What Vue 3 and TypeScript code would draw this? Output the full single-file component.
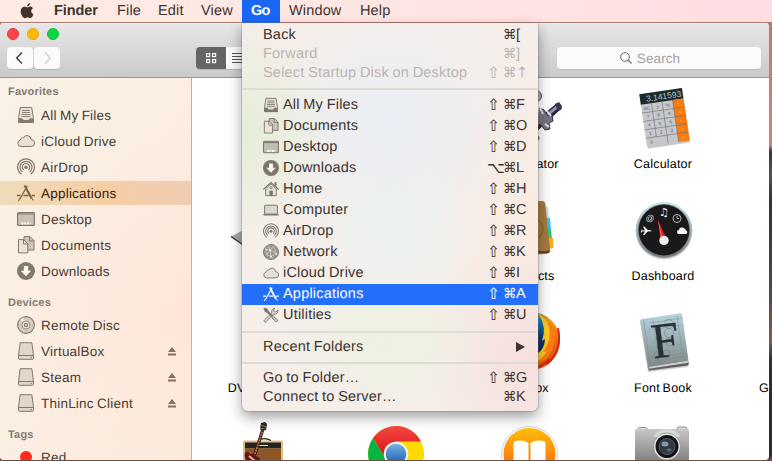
<script setup lang="ts">
interface SideRow { icon: string; label: string; active?: boolean; eject?: boolean }
interface SideGroup { title: string; rows: SideRow[] }
interface MenuRow { label: string; icon?: string; mod?: string; key?: string; disabled?: boolean; active?: boolean; submenu?: boolean }

const menus: { label: string; cls: string }[] = [
  { label: 'Finder', cls: 'finder' },
  { label: 'File', cls: 'file' },
  { label: 'Edit', cls: 'edit' },
  { label: 'View', cls: 'view' },
  { label: 'Go', cls: 'go' },
  { label: 'Window', cls: 'window-item' },
  { label: 'Help', cls: 'help' },
]

const groups: SideGroup[] = [
  {
    title: 'Favorites',
    rows: [
      { icon: 'files', label: 'All My Files' },
      { icon: 'cloud', label: 'iCloud Drive' },
      { icon: 'airdrop', label: 'AirDrop' },
      { icon: 'apps', label: 'Applications', active: true },
      { icon: 'desktop', label: 'Desktop' },
      { icon: 'docs', label: 'Documents' },
      { icon: 'down', label: 'Downloads' },
    ],
  },
  {
    title: 'Devices',
    rows: [
      { icon: 'disc', label: 'Remote Disc' },
      { icon: 'drive', label: 'VirtualBox', eject: true },
      { icon: 'drive', label: 'Steam', eject: true },
      { icon: 'drive', label: 'ThinLinc Client', eject: true },
    ],
  },
  { title: 'Tags', rows: [{ icon: 'red', label: 'Red' }] },
]

const sections: MenuRow[][] = [
  [
    { label: 'Back', key: '[' },
    { label: 'Forward', key: ']', disabled: true },
    { label: 'Select Startup Disk on Desktop', mod: '⇧', key: '↑', disabled: true },
  ],
  [
    { icon: 'files', label: 'All My Files', mod: '⇧', key: 'F' },
    { icon: 'docs', label: 'Documents', mod: '⇧', key: 'O' },
    { icon: 'desktop', label: 'Desktop', mod: '⇧', key: 'D' },
    { icon: 'down', label: 'Downloads', mod: '⌥', key: 'L' },
    { icon: 'home', label: 'Home', mod: '⇧', key: 'H' },
    { icon: 'computer', label: 'Computer', mod: '⇧', key: 'C' },
    { icon: 'airdrop', label: 'AirDrop', mod: '⇧', key: 'R' },
    { icon: 'network', label: 'Network', mod: '⇧', key: 'K' },
    { icon: 'cloud', label: 'iCloud Drive', mod: '⇧', key: 'I' },
    { icon: 'apps', label: 'Applications', mod: '⇧', key: 'A', active: true },
    { icon: 'tools', label: 'Utilities', mod: '⇧', key: 'U' },
  ],
  [{ label: 'Recent Folders', submenu: true }],
  [
    { label: 'Go to Folder…', mod: '⇧', key: 'G' },
    { label: 'Connect to Server…', key: 'K' },
  ],
]

const apps: { id: string; label: string }[] = [
  { id: '', label: '' },
  { id: '', label: '' },
  { id: 'automator', label: 'Automator' },
  { id: 'calculator', label: 'Calculator' },
  { id: '', label: '' },
  { id: 'chess', label: '' },
  { id: '', label: '' },
  { id: 'contacts', label: 'Contacts' },
  { id: 'dashboard', label: 'Dashboard' },
  { id: '', label: '' },
  { id: '', label: 'DVD Player' },
  { id: '', label: '' },
  { id: 'firefox', label: 'Firefox' },
  { id: 'fontbook', label: 'Font Book' },
  { id: '', label: 'Game Center' },
  { id: 'garage', label: '' },
  { id: 'chrome', label: '' },
  { id: 'ibooks', label: '' },
  { id: 'capture', label: '' },
  { id: '', label: '' },
]

const keypad: string[][] = [
  ['AC', '±', '%', '÷'],
  ['7', '8', '9', '×'],
  ['4', '5', '6', '−'],
  ['1', '2', '3', '+'],
  ['0', '', '.', '='],
]
</script>

<template>
  <div class="screen">
    <svg class="defs" width="0" height="0">
      <symbol id="i-files" viewBox="0 0 18 18">
        <path d="M3.300 1.500h11.400l1.600 10v5H1.700v-5z" fill="currentColor" fill-opacity=".12" stroke="currentColor" />
        <path d="M5 4.500h8M5 6.500h8M4.500 8.500h9M4.500 10.500h9" stroke="currentColor" fill="none" stroke-width=".9" />
        <path d="M1.500 12.200h3.500l1.500 1.800h5l1.500-1.800h3.500v4.800h-15z" fill="currentColor" />
      </symbol>
      <symbol id="i-cloud" viewBox="0 0 18 18">
        <path d="M4 14.500a3.300 3.300 0 0 1-.6-6.500 2.300 2.300 0 0 1 3-2.200A4 4 0 0 1 14 7.500a3.500 3.500 0 0 1 .2 7z" fill="currentColor" fill-opacity=".12" stroke="currentColor" />
      </symbol>
      <symbol id="i-airdrop" viewBox="0 0 18 18">
        <g fill="none" stroke="currentColor" stroke-width="1.200">
          <path d="M4.300 16.200a8.400 8.400 0 1 1 9.400 0" />
          <path d="M5.300 14a6 6 0 1 1 7.400 0" />
          <path d="M6.600 12a3.700 3.700 0 1 1 4.800 0" />
        </g>
        <circle cx="9" cy="9.300" r="1.700" fill="currentColor" />
      </symbol>
      <symbol id="i-apps" viewBox="0 0 18 18">
        <g fill="none" stroke="currentColor">
          <path d="M10.300 1.800L3 15" stroke-width="1.300" />
          <path d="M7.600 1.500L14.600 14.500" stroke-width="2.100" />
          <path d="M0 11.500h3.500M6.500 11.500h5M14.800 11.500H18" stroke-width="1.400" />
          <path d="M14.500 14l2 2.500M2.600 14.500L1.500 17" stroke-width="1.100" />
        </g>
      </symbol>
      <symbol id="i-desktop" viewBox="0 0 18 18">
        <rect x=".6" y="2.600" width="16.800" height="12.800" rx="1" fill="currentColor" fill-opacity=".38" stroke="currentColor" stroke-width="1.200" />
        <path d="M1 4h16" stroke="currentColor" stroke-width="1.200" />
        <path d="M4.500 13.500h9" stroke="#fffaf0" stroke-width="2" stroke-dasharray="2 .8" />
      </symbol>
      <symbol id="i-docs" viewBox="0 0 18 18">
        <path d="M7 .600h6l4 4V14H7z" fill="currentColor" fill-opacity=".35" stroke="currentColor" />
        <path d="M12.500 1v4H17" fill="none" stroke="currentColor" />
        <path d="M1.500 3.600h5.300l4 4.200v9.100H1.500z" fill="#ece4d9" stroke="currentColor" />
        <path d="M6.500 4v4h4.300" fill="none" stroke="currentColor" />
      </symbol>
      <symbol id="i-down" viewBox="0 0 18 18">
        <circle cx="9" cy="9" r="9" fill="currentColor" />
        <path d="M6.800 4h4.400v4.700h3L9 14.300 3.800 8.700h3z" fill="#fff8ef" />
      </symbol>
      <symbol id="i-home" viewBox="0 0 18 18">
        <path d="M3 9L9 3.200 15 9v7.500H3z" fill="currentColor" fill-opacity=".12" stroke="currentColor" />
        <path d="M.3 9.700L9 1.800l8.700 7.900" fill="none" stroke="currentColor" stroke-width="1.400" />
        <path d="M13 1.500h2.200v5L13 4.700zM7.200 11h3.800v6H7.200z" fill="currentColor" />
        <circle cx="9" cy="7.500" r="1.200" fill="none" stroke="currentColor" stroke-width=".8" />
      </symbol>
      <symbol id="i-computer" viewBox="0 0 18 18">
        <rect x="1.800" y="3.600" width="14.400" height="10" rx=".8" fill="currentColor" fill-opacity=".2" stroke="currentColor" stroke-width="1.100" />
        <path d="M0 13.600h18l-1 1.700H1z" fill="currentColor" />
      </symbol>
      <symbol id="i-network" viewBox="0 0 18 18">
        <circle cx="9" cy="9" r="8.500" fill="currentColor" fill-opacity=".75" stroke="currentColor" />
        <path d="M3 6l5 1 5-5M8 7l1 7 6-3M3 6l1 6 5 2M8 7l7 4M4 12l4-5M9 14l2 3M8 7L6 2M13 5l2 6" stroke="#f2ece5" stroke-width=".6" fill="none" />
        <g fill="#f2ece5"><circle cx="8" cy="7" r="1.200" /><circle cx="9" cy="14" r="1.200" /><circle cx="15" cy="11" r="1" /><circle cx="3.500" cy="6" r=".9" /></g>
      </symbol>
      <symbol id="i-tools" viewBox="0 0 18 18">
        <path d="M13 1.200a4 4 0 0 0-3 5.300L1.500 14.600a1.300 1.300 0 0 0 1.900 1.900L11.700 8a4 4 0 0 0 5.200-4.400l-2.600 2-2-.5-.2-1.700z" fill="currentColor" fill-opacity=".15" stroke="currentColor" />
        <path d="M1 2l1-1 3 1.200 1 2.300 5.300 5.400-1.400 1.400-5.600-5.200L2.200 5z" fill="currentColor" stroke="currentColor" stroke-width=".6" />
        <path d="M11.800 10.500l5 4.500-1.800 2-5-5z" fill="currentColor" fill-opacity=".35" stroke="currentColor" />
      </symbol>
      <symbol id="i-disc" viewBox="0 0 18 18">
        <circle cx="9" cy="9" r="8.300" fill="currentColor" fill-opacity=".28" stroke="currentColor" stroke-width="1.200" />
        <path d="M9 9L3 3.500A8 8 0 0 1 6.500 1.300z" fill="#fff" opacity=".5" />
        <circle cx="9" cy="9" r="4" fill="#f4eade" stroke="currentColor" stroke-width=".8" />
        <circle cx="9" cy="9" r="1.600" fill="none" stroke="currentColor" stroke-width="1.200" />
      </symbol>
      <symbol id="i-drive" viewBox="0 0 18 18">
        <path d="M3.200.700h11.600l1.700 12.600v3.100q0 .9-.9.900H2.400q-.9 0-.9-.9v-3.100z" fill="currentColor" fill-opacity=".2" stroke="currentColor" />
        <path d="M1.500 13.500h15" stroke="currentColor" />
        <circle cx="14.200" cy="15.500" r=".7" fill="currentColor" />
      </symbol>
      <symbol id="i-red" viewBox="0 0 18 18"><circle cx="9" cy="9" r="6" fill="#fb2b20" /></symbol>
    </svg>

    <header class="menubar">
      <svg class="apple" viewBox="0 0 14 16">
        <path d="M10.300 0c.1 1.700-1.400 3.400-3.200 3.400C6.900 1.800 8.500.2 10.300 0zM7.200 4.400c.7 0 1.600-.8 2.900-.8 1.200 0 2.300.6 2.900 1.600-2.600 1.500-2.200 5 .5 6-.5 1.400-1.800 4-3.400 4-1 0-1.400-.6-2.600-.6s-1.700.6-2.600.6C3 15.200.700 11.500.700 8.200c0-3 1.900-4.500 3.700-4.500 1.200 0 2.100.7 2.800.7z" fill="currentColor" />
      </svg>
      <span v-for="m in menus" :key="m.label" class="mb-item" :class="m.cls">{{ m.label }}</span>
    </header>

    <main class="finder-window">
      <div class="toolbar">
        <div class="lights"><i class="l-red" /><i class="l-yellow" /><i class="l-green" /></div>
        <div class="tools">
          <button class="nav"><svg viewBox="0 0 26 22"><path d="M15 5.500L9.700 11l5.300 5.500" fill="none" stroke="#4a4a4a" stroke-width="1.600" /></svg></button>
          <button class="nav"><svg viewBox="0 0 26 22"><path d="M11 5.500l5.300 5.500-5.300 5.500" fill="none" stroke="#cfcfcf" stroke-width="1.300" /></svg></button>
          <div class="segments">
            <div class="seg dark"><svg viewBox="0 0 30 22"><g fill="none" stroke="#fff" stroke-width="1.200"><rect x="10.600" y="6.600" width="3" height="3" /><rect x="16.600" y="6.600" width="3" height="3" /><rect x="10.600" y="12.600" width="3" height="3" /><rect x="16.600" y="12.600" width="3" height="3" /></g></svg></div>
            <div class="seg"><svg viewBox="0 0 30 22"><path d="M6 6.500h12M6 9.500h12M6 12.500h12M6 15.500h12" stroke="#555" /></svg></div>
          </div>
          <div class="search">
            <svg viewBox="0 0 12 12"><circle cx="5" cy="5" r="4.300" fill="none" stroke="#666" /><path d="M8.200 8.200l3.300 3.300" stroke="#666" stroke-width="1.200" /></svg>
            <span>Search</span>
          </div>
        </div>
      </div>

      <div class="body">
        <aside class="sidebar">
          <section v-for="g in groups" :key="g.title">
            <h2>{{ g.title }}</h2>
            <div v-for="r in g.rows" :key="r.label" class="side-row" :class="{ active: r.active }">
              <svg class="side-icon"><use :href="'#i-' + r.icon" /></svg>
              <span class="side-label">{{ r.label }}</span>
              <svg v-if="r.eject" class="eject" viewBox="0 0 8 9"><path d="M4 0l4 5H0zM0 6.500h8v2H0z" fill="currentColor" /></svg>
            </div>
          </section>
        </aside>

        <div class="grid">
          <div v-for="(a, i) in apps" :key="i" class="app">
            <svg class="app-icon" viewBox="0 0 64 64">
              <template v-if="a.id === 'automator'">
                <circle cx="39" cy="10" r="5.500" fill="#a9a9b0" stroke="#55555c" />
                <path d="M30 42L60 17l5 5-30 28z" fill="#28263a" />
                <path d="M38 37l22-18 2 2-22 19z" fill="#9993b7" />
                <path d="M58 18l4-2 3 4-1 4-3 1z" fill="#3b374f" />
                <path d="M42 22l5 2 4 6 4-1 1 6-4 2 1 6-5 1-5-6-4 3" fill="#77737f" stroke="#34313d" />
                <path d="M43 22l3 6M48 38l4 3M50 25l4 5" stroke="#dedee4" stroke-width="2" />
                <circle cx="40" cy="52" r="2.500" fill="#666" />
              </template>
              <template v-else-if="a.id === 'calculator'">
                <g transform="translate(8.300 8.300) rotate(-8.400)">
                  <rect x=".5" y="1" width="43" height="54" rx="1" fill="#000" opacity=".22" />
                  <rect width="43" height="53" rx=".8" fill="#c5c7ca" />
                  <rect width="43" height="10.500" fill="#1d2b2b" />
                  <rect x="32" y="10.500" width="11" height="42.500" fill="#fb7a0c" />
                  <path d="M0 19h43M0 27.500h43M0 36h43M0 44.500h43M10.700 10.500v34M21.400 10.500V53M32 10.500V53" stroke="#6f7378" stroke-width=".6" />
                  <text x="41.500" y="8.400" text-anchor="end" class="calc-display">3.141593</text>
                  <template v-for="(line, y) in keypad" :key="y">
                    <text v-for="(k, x) in line" :key="x" :x="5.400 + x * 10.700" :y="16.500 + y * 8.500" class="calc-key" :class="{ op: x === 3 }">{{ k }}</text>
                  </template>
                </g>
              </template>
              <template v-else-if="a.id === 'chess'">
                <path d="M2 38.500L30 24v32z" fill="#a9a9a9" /><path d="M2 38.500L30 58" stroke="#333" stroke-width="1.500" />
              </template>
              <template v-else-if="a.id === 'contacts'">
                <path d="M47 8l4 1 1 13-4 1z" fill="#d5d5d5" /><path d="M48 20l5 0 1 11-5 1z" fill="#39bff0" />
                <path d="M49 31l5 0 1 10-5 1z" fill="#22d175" /><path d="M50 40h6l.5 10-6 1z" fill="#f7ae1b" />
                <path d="M8 3h37q3 0 3.300 3L53 51q0 5-5 5l-32 2z" fill="#a67a3f" />
                <path d="M16 56l36-1q1-1 1-3l-4 1H16z" fill="#68441d" />
                <circle cx="35" cy="31" r="11" fill="none" stroke="#7b5729" stroke-width=".8" />
              </template>
              <template v-else-if="a.id === 'dashboard'">
                <circle cx="33" cy="33" r="28.500" fill="#000" opacity=".18" />
                <circle cx="33" cy="32" r="28" fill="url(#dashRim)" />
                <circle cx="33" cy="32" r="25.500" fill="#191919" stroke="#4a5054" stroke-width=".5" />
                <text x="19" y="23" class="at">@</text>
                <text x="33" y="17.500" class="note">♫</text>
                <circle cx="46" cy="20.500" r="4" fill="none" stroke="#ddd" stroke-width=".8" /><path d="M46 18v2.500h2" fill="none" stroke="#ddd" stroke-width=".8" />
                <path d="M10 32.500l4-.3-2-3.700h1.300l3.400 3.600 3.300.2q1 .4 0 .9l-3.300.2-3.400 3.600H12l2-3.600-2.500-.1-1 1.200h-.8l.5-1.900-.5-1.900h.8z" fill="#fff" />
                <path d="M48 36a2 2 0 0 1 0-4 3 3 0 0 1 5.200-1.500 2.300 2.300 0 0 1 1.800 2 1.800 1.800 0 0 1-.2 3.500z" fill="#fff" />
                <path d="M27 21.500l2.800 20.500 5.500-1.500z" fill="#e5131d" /><path d="M27 21.500l3 20 2-.6z" fill="#ff6060" />
                <circle cx="33" cy="42.500" r="4.700" fill="#eee" />
              </template>
              <template v-else-if="a.id === 'firefox'">
                <circle cx="34" cy="31" r="29" fill="url(#fox)" />
                <circle cx="31" cy="26" r="22" fill="url(#globe)" />
                <path d="M42 4q8 5 9 12l3-3q5 12-1 23l2 0q-5 15-19 17l-5-7q16-1 17-17l-3 2q5-13-3-27z" fill="#ffcb1f" />
                <path d="M51 13q5 16-5 29l4-1q-5 9-14 12 14 0 19-13 6-13-1-28z" fill="#ff7b10" />
                <path d="M61 18q5 22-11 36l2-5q-7 8-16 10" fill="none" stroke="#cf2512" stroke-width="1.800" />
              </template>
              <template v-else-if="a.id === 'fontbook'">
                <path d="M9 11L51 5l7 49-1 3-40 5z" fill="#000" opacity=".2" />
                <path d="M16.500 56L56 49.500l2 4-1.500 2L18 60.500z" fill="#625e5b" />
                <path d="M17 56.500l40-6 .5 2.300-39.300 6z" fill="#c9cccd" />
                <path d="M9 11q-.2-1.500 1.300-1.800L49 3.300q1.700-.2 2 1.300l6.300 46L17 57z" fill="url(#book)" />
                <path d="M12.500 9.500l7 47" stroke="#7b8f98" stroke-width=".6" />
                <path d="M18 13l34-5M22 52l32-6M22 9l6 45M46 6l6 42M20 48l34-5M17 20l35-5" stroke="#70868c" stroke-width=".4" />
                <g fill="none" stroke="#667c82" stroke-width=".5"><circle cx="38" cy="14" r="4.500" /><circle cx="38" cy="23" r="4.500" /><circle cx="39" cy="32" r="4" /><circle cx="27" cy="45" r="4" /><circle cx="35" cy="44" r="4" /></g>
                <text x="22.500" y="48.500" transform="rotate(-7 22 48)" class="big-f">F</text>
              </template>
              <template v-else-if="a.id === 'garage'">
                <rect x="14" y="18.500" width="40" height="46" rx="1.500" fill="#dfbd7c" />
                <rect x="16" y="20.500" width="36" height="6" fill="#252422" />
                <rect x="16" y="26.500" width="36" height="38" fill="#8f5728" />
                <path d="M30 18q6-3 12 .5" fill="none" stroke="#222" stroke-width="1.200" />
                <path d="M29 23.500h10" stroke="#ddd" stroke-width="1" />
                <path d="M34 7L25 35" stroke="#33160d" stroke-width="3.200" /><path d="M34 7L25 35" stroke="#b28360" stroke-width="1.600" stroke-dasharray="2 .7" />
                <path d="M32 1l4-1 2 2-1 6-4 1-2-2z" fill="#29271c" /><path d="M32 3l5 2M31 6l5 1" stroke="#ada678" stroke-width=".7" />
                <path d="M17 38q-3-6 0-8 2-1 4 2 3-1 4 1l6 3v5z" fill="#63131a" /><path d="M20 34l6 5" stroke="#e6b7a0" stroke-width="2" />
              </template>
              <template v-else-if="a.id === 'chrome'">
                <circle cx="33" cy="32" r="28" fill="#ffd900" />
                <path d="M33 19.500h25A28 28 0 0 0 10 16l12 20z" fill="url(#chrRed)" />
                <path d="M10 16a28 28 0 0 0 9 40l13-14-10-6z" fill="#04b63f" />
                <circle cx="33" cy="32" r="12.300" fill="#f3f4ee" />
                <circle cx="33" cy="32" r="10.300" fill="url(#chrBlue)" />
              </template>
              <template v-else-if="a.id === 'ibooks'">
                <circle cx="32.500" cy="32.500" r="28" fill="#fff" stroke="#d4d4d4" />
                <circle cx="32.500" cy="32" r="26" fill="url(#books)" />
                <path d="M31.500 21q-6-4-14-1.500-1 .5-1 2V42h15zM33.500 21q6-4 14-1.500 1 .5 1 2V42h-15z" fill="#fff" />
              </template>
              <template v-else-if="a.id === 'capture'">
                <path d="M7 7q0-1.500 1.500-1.500h6Q16 5.500 16 7M46 7q0-2 2-2h6q2 0 2 2" fill="#ddd" stroke="#777" stroke-width=".8" />
                <rect x="4" y="7" width="54" height="52" rx="1.500" fill="url(#cam)" />
                <path d="M23 15Q26 7 36 7t13 8" fill="#d7d7d7" />
                <circle cx="36" cy="24.500" r="13.500" fill="#e6e6e6" stroke="#777" stroke-width=".6" />
                <circle cx="36" cy="24.500" r="11.500" fill="#141416" /><circle cx="36" cy="24.500" r="8" fill="#303842" stroke="#555e66" />
                <ellipse cx="34" cy="22" rx="3.500" ry="2.500" fill="#8199b0" /><ellipse cx="38" cy="28" rx="2.500" ry="1.500" fill="#566778" />
              </template>
              <defs v-if="i === 0">
                <linearGradient id="dashRim" x2="0" y2="1"><stop offset="0" stop-color="#c9e4eb" /><stop offset="1" stop-color="#777d83" /></linearGradient>
                <linearGradient id="fox" x1="0" x2="1" y2="1"><stop offset="0" stop-color="#1178b8" /><stop offset=".5" stop-color="#f79b16" /><stop offset="1" stop-color="#d72b0c" /></linearGradient>
                <linearGradient id="globe" x2="0" y2="1"><stop offset="0" stop-color="#14a6d8" /><stop offset=".5" stop-color="#0d3c80" /><stop offset="1" stop-color="#061743" /></linearGradient>
                <linearGradient id="book" x2="0" y2="1"><stop offset="0" stop-color="#b5d4dc" /><stop offset="1" stop-color="#828888" /></linearGradient>
                <linearGradient id="chrRed" x2="0" y2="1"><stop offset="0" stop-color="#f34a45" /><stop offset="1" stop-color="#db0d13" /></linearGradient>
                <linearGradient id="chrBlue" x2="0" y2="1"><stop offset="0" stop-color="#7eaee2" /><stop offset="1" stop-color="#1361b2" /></linearGradient>
                <linearGradient id="books" x2="0" y2="1"><stop offset="0" stop-color="#ffbd08" /><stop offset=".8" stop-color="#fa6b0c" /></linearGradient>
                <linearGradient id="cam" x2="0" y2="1"><stop offset="0" stop-color="#c7c7c7" /><stop offset=".7" stop-color="#777" /></linearGradient>
              </defs>
            </svg>
            <span v-if="a.label" class="app-label">{{ a.label }}</span>
          </div>
        </div>
      </div>
    </main>

    <nav class="dropdown">
      <div v-for="(s, si) in sections" :key="si" class="section">
        <div v-for="r in s" :key="r.label" class="menu-row" :class="{ tall: r.icon, disabled: r.disabled, active: r.active }">
          <svg v-if="r.icon" class="menu-icon"><use :href="'#i-' + r.icon" /></svg>
          <span class="menu-label">{{ r.label }}</span>
          <svg v-if="r.submenu" class="arrow" viewBox="0 0 9 10"><path d="M0 0l9 5-9 5z" fill="currentColor" /></svg>
          <span v-else class="shortcut">
            <b class="mod">{{ r.mod }}</b><b class="cmd">⌘</b><b class="key" :class="{ sym: r.key === '↑' }">{{ r.key }}</b>
          </span>
        </div>
      </div>
    </nav>
  </div>
</template>

<style>
html, body { margin: 0; overflow: hidden; }
</style>

<style scoped>
.screen {
  position: relative;
  box-sizing: border-box;
  width: 772px;
  height: 461px;
  overflow: hidden;
  display: flex;
  flex-direction: column;
  font-family: "Liberation Sans", Arial, sans-serif;
  text-rendering: geometricPrecision;
  color: #40332d;
  background: linear-gradient(to bottom, #b3776c 0, #cb777b 60px, #d5827e 145px, #403137 152px, #604f4b 175px, #39303a 200px, #594441 290px, #80604e 340px, #332d38 360px, #2c2932 455px, #6d4e40 460px);
}
.defs { position: absolute; }
.menubar {
  flex: none;
  display: flex;
  height: 22px;
  background: linear-gradient(to right, #fdebe3, #ffe5e4 60%, #ffdce2);
  border-bottom: 1px solid #b17a70;
  font-size: 14.5px;
  line-height: 23px;
  letter-spacing: .15px;
}
.apple { flex: none; width: 14px; height: 16px; margin: 2.5px 20px 0 20px; }
.mb-item { flex: none; white-space: nowrap; box-sizing: border-box; }
.finder { width: 63px; font-weight: bold; letter-spacing: -.1px; }
.file { width: 41px; }
.edit { width: 43px; }
.view { width: 41px; }
.go { width: 38px; padding-left: 9px; background: #1a66f5; color: #fff; font-weight: bold; letter-spacing: -.8px; height: 23px; }
.window-item { width: 80px; padding-left: 9px; }

.finder-window {
  display: flex;
  flex-direction: column;
  width: 769px;
  height: 437px;
  border-radius: 4px;
  overflow: hidden;
  background: #fff;
}
.toolbar {
  flex: none;
  box-sizing: border-box;
  height: 55px;
  border-bottom: 1px solid #979797;
  background: linear-gradient(#e8e6e7, #cbcacb);
  box-shadow: inset 0 1px #f4f2f3;
}
.lights { display: flex; gap: 8px; padding: 5px 7px 7px; }
.lights i { width: 12px; height: 12px; border-radius: 50%; box-sizing: border-box; }
.l-red { background: #fe4449; border: 1px solid #e3353d; }
.l-yellow { background: #fdbc03; border: 1px solid #e0a411; }
.l-green { background: #08d842; border: 1px solid #16bd3b; }
.tools { display: flex; padding: 0 8px 0 7px; }
.nav {
  width: 26px; height: 22px; margin: 0 1px 0 0; padding: 0; border: 0;
  border-radius: 4px; background: #fbfbfb; box-shadow: 0 1px #b4b4b4;
}
.nav svg, .seg svg { display: block; height: 22px; }
.segments { display: flex; height: 22px; margin-left: 135px; border-radius: 4px; box-shadow: 0 1px #b4b4b4; overflow: hidden; }
.seg { width: 30px; background: #fafafa; }
.seg.dark { background: #656565; }
.search {
  display: flex; align-items: center; justify-content: center; gap: 5px;
  box-sizing: border-box; width: 204px; height: 22px; margin-left: auto; padding: 0 18px 0 0;
  border-radius: 4px; background: #fbfbfb; box-shadow: 0 1px #bebebe;
  font-size: 13.5px; letter-spacing: .1px; color: #a3a3a3;
}
.search svg { width: 12px; height: 12px; }

.body { display: flex; flex: 1; min-height: 0; }
.sidebar {
  flex: none; box-sizing: border-box; width: 192px; overflow: hidden; padding-top: 4px;
  border-right: 1px solid #bbb2ae;
  background:
    radial-gradient(circle at 100% 60%, #ffe6da 0, rgba(255, 230, 218, 0) 180px),
    linear-gradient(115deg, #f9f2e6 0%, #fbeee2 50%, #fbebdb 100%);
}
.sidebar section { display: flex; flex-direction: column; }
h2 {
  margin: 0; padding: 0 8px; height: 20px; font-size: 11px; line-height: 21px;
  letter-spacing: .2px; color: #847b72;
}
section + section h2 { padding-top: 8px; line-height: 22px; }
.side-row {
  display: flex; align-items: center; height: 24px; margin: 1px 0; padding-left: 17px;
  font-size: 13.5px; letter-spacing: .22px; word-spacing: -.7px; color: #463c35; white-space: nowrap;
}
.side-row.active { color: #3c2200; background: linear-gradient(to right, #efddb9, #f6cda5 55%, #efccb2); }
.side-icon { flex: none; width: 18px; height: 18px; margin-right: 6px; color: #82786c; }
.active .side-icon { color: #796441; }
.eject { width: 8px; height: 9px; margin-left: auto; margin-right: 15px; color: #85725f; }

.grid {
  flex: 1; overflow: hidden; display: grid; grid-template-columns: repeat(5, 134px);
  grid-auto-rows: 112px; padding-left: 2px;
}
.app { display: flex; flex-direction: column; align-items: center; padding-top: 8px; }
.app-icon { flex: none; width: 64px; height: 64px; overflow: visible; }
.app-label { margin-top: 6px; font-size: 12.5px; line-height: 16px; letter-spacing: .2px; word-spacing: -1px; color: #000; white-space: nowrap; }
.calc-display { font-size: 8.500px; fill: #b9c7c4; }
.calc-key { font-size: 4.500px; text-anchor: middle; fill: #555; }
.calc-key.op { fill: #ffdfbf; }
.at { font-size: 8.500px; fill: #ddd; text-anchor: middle; }
.note { font: 11px "DejaVu Sans", sans-serif; fill: #fff; text-anchor: middle; }
.big-f { font: 50px "Liberation Serif", serif; fill: #253238; stroke: #253238; stroke-width: .3px; }

.dropdown {
  position: absolute; left: 242px; top: 23px; box-sizing: border-box; width: 296px; height: 388px;
  padding-top: 3px; border-radius: 0 0 6px 6px;
  background:
    radial-gradient(ellipse 90px 110px at 0 110px, #e3eed8, rgba(227, 238, 216, 0)),
    radial-gradient(ellipse 130px 120px at 150px 100px, #e8eef5, rgba(232, 238, 245, 0)),
    radial-gradient(ellipse 90px 80px at 150px 205px, #eaf3f1, rgba(234, 243, 241, 0)),
    radial-gradient(ellipse 100px 70px at 145px 315px, #ecf2e1, rgba(236, 242, 225, 0)),
    radial-gradient(ellipse 120px 120px at 296px 330px, #f7dedc, rgba(247, 222, 220, 0)),
    radial-gradient(ellipse 120px 160px at 296px 190px, #faebe0, rgba(250, 235, 224, 0)),
    #f5eee9;
  box-shadow: 0 0 0 1px rgba(120, 110, 110, .28), 0 6px 14px rgba(0, 0, 0, .38);
  font-size: 14.5px; letter-spacing: .2px; word-spacing: -.6px;
}
.section + .section::before {
  content: ""; display: block; height: 2px; margin: 5px 0; background: #dedad6;
}
.menu-row { display: flex; align-items: center; height: 19px; padding: 0 18px 0 21px; white-space: nowrap; line-height: 19px; }
.menu-row.tall { height: 21px; }
.menu-row.disabled { color: #bab4b1; }
.menu-row.active { background: #246ff9; color: #fff; }
.menu-icon { flex: none; width: 16px; height: 16px; margin: 0 4px 1px 0; color: #7b776d; }
.active .menu-icon { color: #fff; }
.shortcut { flex: none; display: flex; align-items: center; margin-left: auto; width: 38px; height: 19px; margin-right: -5px; }
.shortcut b { flex: none; font-weight: normal; letter-spacing: 0; }
.mod, .cmd, .sym { font-family: "DejaVu Sans", sans-serif; }
.mod { width: 16px; font-size: 15.5px; }
.cmd { width: 13px; font-size: 13.5px; }
.arrow { width: 9px; height: 10px; margin-left: auto; margin-right: -5px; margin-bottom: 1px; }
</style>
